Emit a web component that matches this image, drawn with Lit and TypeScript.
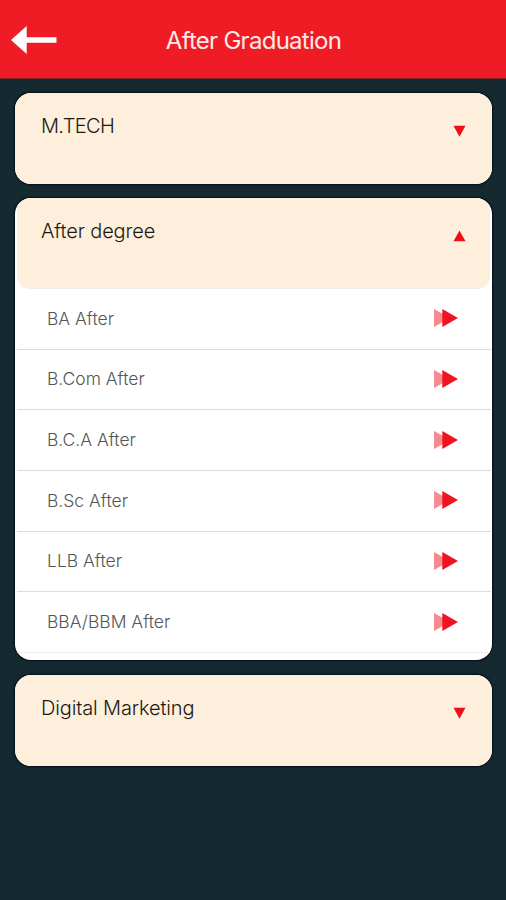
import { LitElement, html, css, svg } from "lit";
import { customElement, property, state } from "lit/decorators.js";
import { classMap } from "lit/directives/class-map.js";

interface Section {
  title: string;
  items: string[];
}

const SECTIONS: Section[] = [
  { title: "M.TECH", items: [] },
  {
    title: "After degree",
    items: ["BA After", "B.Com After", "B.C.A After", "B.Sc After", "LLB After", "BBA/BBM After"],
  },
  { title: "Digital Marketing", items: [] },
];

@customElement("top-bar")
class TopBar extends LitElement {
  @property() heading = "";

  static styles = css`
    :host {
      display: grid;
      grid-template-columns: 60px 1fr 60px;
      align-items: center;
      height: 79px;
      box-sizing: border-box;
      background: #ef1c25;
      border-bottom: 1px solid #8a2028;
      color: #ffe9e6;
    }
    .back {
      display: block;
      margin-left: 11px;
      margin-top: 1px;
    }
    .heading {
      text-align: center;
      font-size: 24px;
      font-weight: 400;
      line-height: 30px;
      margin-top: 3px;
      padding-left: 1px;
      white-space: nowrap;
      letter-spacing: -0.73px;
    }
  `;

  render() {
    return html`
      <svg class="back" width="47" height="30" viewBox="0 0 47 30">
        <path d="M0 15 L15.7 1 V12.3 H45.5 V17.7 H15.7 V29 Z" fill="#fff" />
      </svg>
      <div class="heading">${this.heading}</div>
    `;
  }
}

@customElement("section-card")
class SectionCard extends LitElement {
  @property({ attribute: false }) section!: Section;
  @state() private open = false;

  connectedCallback() {
    super.connectedCallback();
    this.open = this.section.items.length > 0;
  }

  static styles = css`
    :host {
      display: block;
    }
    .card {
      box-sizing: border-box;
      min-height: 90.5px;
      background: #feefdc;
      border-radius: 16px;
      box-shadow: 0 0 2px 1px #050d16;
      overflow: hidden;
    }
    .card.open {
      background: #fff;
      padding-bottom: 7.5px;
    }
    .head {
      display: flex;
      justify-content: space-between;
      box-sizing: border-box;
      height: 90.5px;
      padding: 20px 26.5px 0 26px;
      background: #feefdc;
      border-radius: 0 0 13px 13px;
    }
    .card.open .head {
      margin: 0 2px 0 1.5px;
      padding-left: 24.5px;
      padding-right: 24.5px;
      border-bottom: 1px solid #f3ece6;
    }
    .title {
      font-size: 20px;
      line-height: 26px;
      font-weight: 350;
      letter-spacing: -0.14px;
      color: #1d1914;
      white-space: nowrap;
    }
    .title.caps {
      letter-spacing: -0.65px;
    }
    .toggle {
      display: block;
      margin-top: 12px;
    }
    .row {
      display: flex;
      align-items: center;
      justify-content: space-between;
      box-sizing: border-box;
      height: 60.67px;
      margin: 0 1.5px;
      padding: 0 32.5px 0 30.5px;
      border-bottom: 1px solid #dcdcde;
    }
    .row:last-child {
      border-bottom-color: #eeeeef;
    }
    .label {
      font-size: 17.5px;
      line-height: 24px;
      font-weight: 300;
      color: #555;
      white-space: nowrap;
    }
    .go {
      display: block;
      margin-top: -1px;
    }
  `;

  render() {
    const { title, items } = this.section;
    const caps = title === title.toUpperCase();
    return html`
      <div class=${classMap({ card: true, open: this.open })}>
        <div class="head" @click=${() => (this.open = !this.open && items.length > 0)}>
          <span class=${classMap({ title: true, caps })}>${title}</span>
          <svg class="toggle" width="13" height="12" viewBox="0 0 13 12">
            ${this.open
              ? svg`<path d="M6.5 0.5 L12.5 11.3 H0.5 Z" fill="#ee0f1a" />`
              : svg`<path d="M6.5 11.8 L12.5 0.8 H0.5 Z" fill="#ee0f1a" />`}
          </svg>
        </div>
        ${this.open
          ? items.map(
              (item) => html`
                <div class="row">
                  <span class="label">${item}</span>
                  <svg class="go" width="24" height="18" viewBox="0 0 24 18">
                    <path d="M0 0 L16 9 L0 18 Z" fill="#f58a90" />
                    <path d="M8.3 0 L24 9 L8.3 18 Z" fill="#ee1420" />
                  </svg>
                </div>
              `,
            )
          : null}
      </div>
    `;
  }
}

@customElement("app-root")
class AppRoot extends LitElement {
  static styles = css`
    :host {
      display: block;
      min-height: 900px;
      background: #152a30;
      font-family: Inter, "Liberation Sans", sans-serif;
    }
    .list {
      display: flex;
      flex-direction: column;
      gap: 14.7px;
      padding: 14.3px 14px 0 15px;
    }
  `;

  render() {
    return html`
      <top-bar heading="After Graduation"></top-bar>
      <div class="list">
        ${SECTIONS.map((section) => html`<section-card .section=${section}></section-card>`)}
      </div>
    `;
  }
}
